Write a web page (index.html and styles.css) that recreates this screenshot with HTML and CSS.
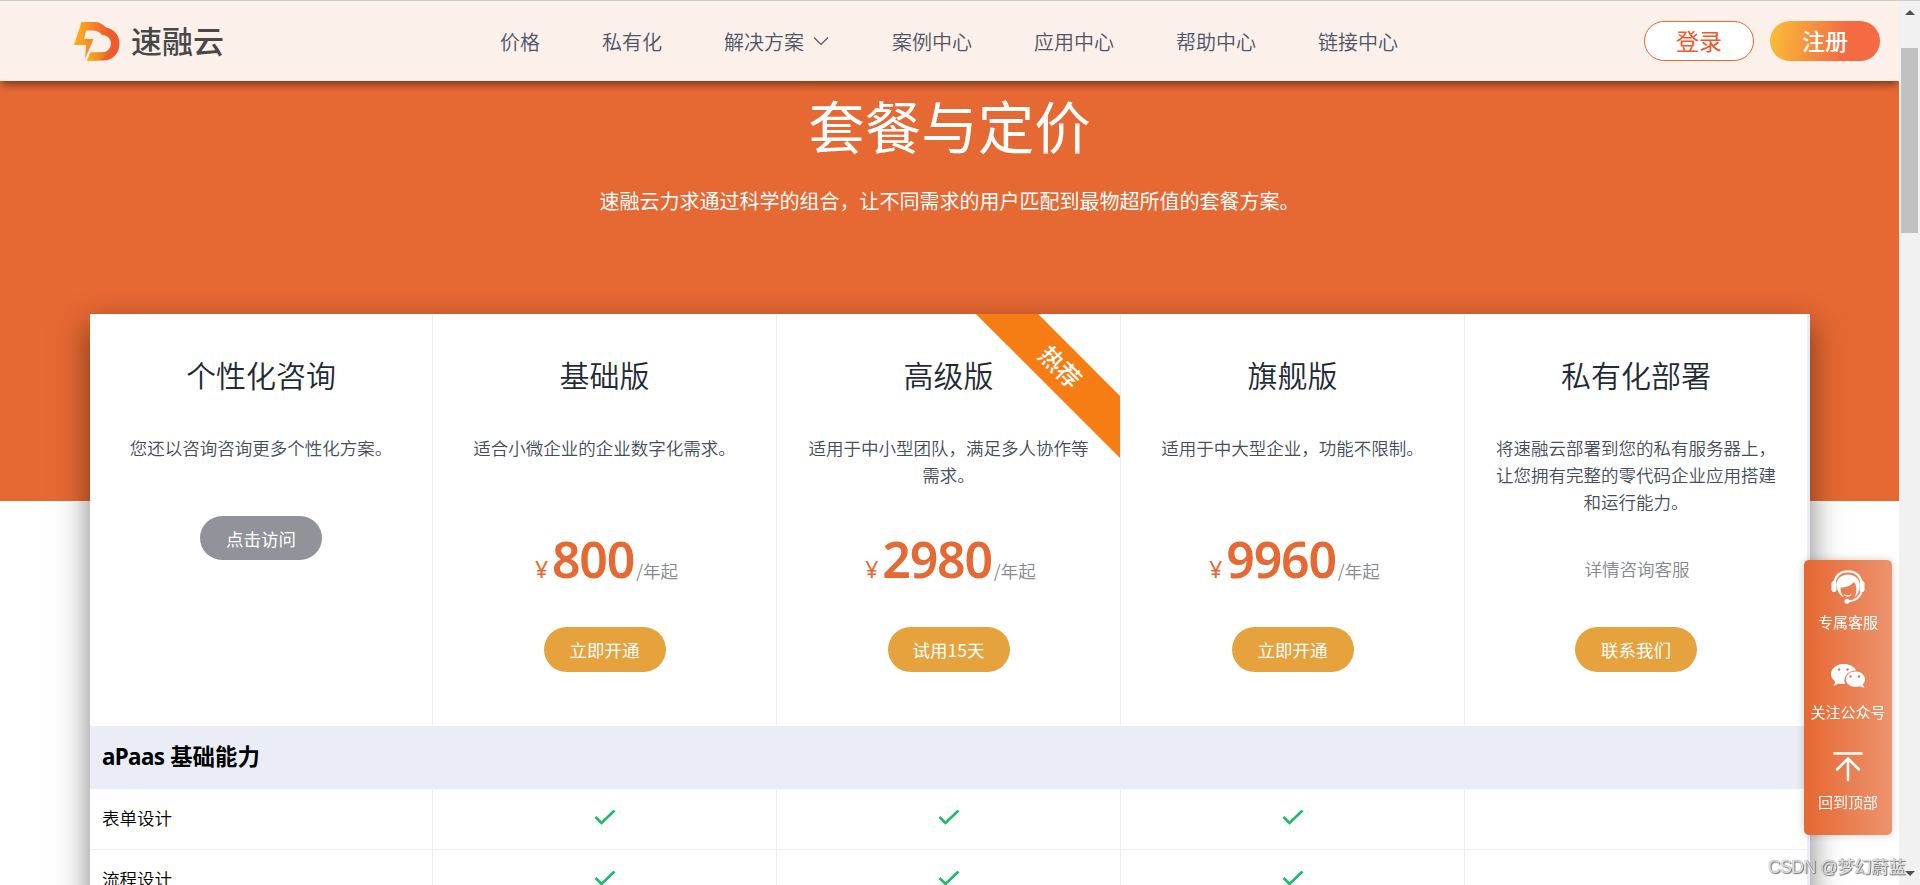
FILE: index.html
```
<!DOCTYPE html>
<html lang="zh-CN">
<head>
    <meta charset="UTF-8">
    <meta name="viewport" content="width=device-width, initial-scale=1.0">
    <title>速融云 - 套餐与定价</title>
    <link rel="stylesheet" href="styles.css">
</head>
<body>

    <div class="page">
        <header class="header">
            <a class="logo">
                <svg width="46" height="39" viewBox="0 0 46 39">
                    <defs>
                        <linearGradient id="logo-main" x1="0" y1="0" x2="1" y2="0">
                            <stop offset="0.1" stop-color="#f9a921"/>
                            <stop offset="0.75" stop-color="#f15a2b"/>
                        </linearGradient>
                        <linearGradient id="logo-foot" x1="0" y1="0" x2="1" y2="0">
                            <stop offset="0" stop-color="#fbb01f"/>
                            <stop offset="1" stop-color="#e2711c"/>
                        </linearGradient>
                    </defs>
                    <path fill="url(#logo-main)" d="M7.5 0H20c5 0 9 2 12 5.500C40 7 45.500 13 45.500 21.500 45.500 31 39 38.500 29 38.500H13l3.500-8H27c6 0 10-4 10-9 0-5-4-8.500-9-8.500-2.500-3-5-4.500-9-4.500h-7L10 17h9.500L11 37l1-14H0z"/>
                    <path fill="url(#logo-foot)" d="M16.500 30.500H28c3 0 5-1 7-2.500-2 5-6 9-12 10.500H13z"/>
                </svg>
                <span>速融云</span>
            </a>
            <nav class="nav">
                <a>价格</a>
                <a>私有化</a>
                <a>解决方案<svg class="arrow" width="16" height="10" viewBox="0 0 16 10"><path d="M1 1.500l7 7 7-7"/></svg></a>
                <a>案例中心</a>
                <a>应用中心</a>
                <a>帮助中心</a>
                <a>链接中心</a>
            </nav>
            <div class="user">
                <button class="btn-login">登录</button>
                <button class="btn-reg">注册</button>
            </div>
        </header>

        <section class="banner">
            <h1>套餐与定价</h1>
            <p>速融云力求通过科学的组合，让不同需求的用户匹配到最物超所值的套餐方案。</p>
        </section>

        <div class="plans">
            <div class="row row-head">
                <div class="cell">
                    <h2>个性化咨询</h2>
                    <p class="desc">您还以咨询咨询更多个性化方案。</p>
                    <button class="btn btn-info">点击访问</button>
                </div>
                <div class="cell">
                    <h2>基础版</h2>
                    <p class="desc">适合小微企业的企业数字化需求。</p>
                    <div class="price"><i>¥</i><b>800</b><span>/年起</span></div>
                    <button class="btn">立即开通</button>
                </div>
                <div class="cell">
                    <div class="ribbon"><span>热荐</span></div>
                    <h2>高级版</h2>
                    <p class="desc">适用于中小型团队，满足多人协作等需求。</p>
                    <div class="price"><i>¥</i><b>2980</b><span>/年起</span></div>
                    <button class="btn">试用15天</button>
                </div>
                <div class="cell">
                    <h2>旗舰版</h2>
                    <p class="desc">适用于中大型企业，功能不限制。</p>
                    <div class="price"><i>¥</i><b>9960</b><span>/年起</span></div>
                    <button class="btn">立即开通</button>
                </div>
                <div class="cell">
                    <h2>私有化部署</h2>
                    <p class="desc">将速融云部署到您的私有服务器上，让您拥有完整的零代码企业应用搭建和运行能力。</p>
                    <div class="price price-text"><span>详情咨询客服</span></div>
                    <button class="btn">联系我们</button>
                </div>
            </div>
            <div class="group"><span>aPaas</span> 基础能力</div>
            <div class="row row-item">
                <div class="cell name">表单设计</div>
                <div class="cell"><svg class="check" viewBox="0 0 22 16"><path d="M1.500 8l6 6L20.500 1.500"/></svg></div>
                <div class="cell"><svg class="check" viewBox="0 0 22 16"><path d="M1.500 8l6 6L20.500 1.500"/></svg></div>
                <div class="cell"><svg class="check" viewBox="0 0 22 16"><path d="M1.500 8l6 6L20.500 1.500"/></svg></div>
                <div class="cell"></div>
            </div>
            <div class="row row-item">
                <div class="cell name">流程设计</div>
                <div class="cell"><svg class="check" viewBox="0 0 22 16"><path d="M1.500 8l6 6L20.500 1.500"/></svg></div>
                <div class="cell"><svg class="check" viewBox="0 0 22 16"><path d="M1.500 8l6 6L20.500 1.500"/></svg></div>
                <div class="cell"><svg class="check" viewBox="0 0 22 16"><path d="M1.500 8l6 6L20.500 1.500"/></svg></div>
                <div class="cell"></div>
            </div>
        </div>
    </div>

    <!-- scrollbar -->
    <div class="scrollbar">
        <div class="up"></div>
        <div class="thumb"></div>
        <div class="down"></div>
    </div>

    <!-- floating toolbar -->
    <div class="toolbar">
        <div class="tool">
            <svg width="34" height="34" viewBox="0 0 34 34">
                <path d="M3.500 12C5 5 10 1.300 17 1.300S29 5 30.500 12" fill="none" stroke="#fff" stroke-width="2.200"/>
                <rect x="0.500" y="11" width="5" height="11" rx="2.500" fill="#fff"/>
                <rect x="28.500" y="11" width="5" height="11" rx="2.500" fill="#fff"/>
                <path d="M5.500 14C6 8 11 4.500 17 4.500S28 8 28.500 14c.3 6-1.500 10.500-5 13.500 2-3.500 2.500-8 1-13.500l-2-2c-3 4-7 5.500-13 5.500 0 4 1 7 3.500 10C8 25 5.500 20 5.500 14z" fill="#fff"/>
                <path d="M12.500 24c2.500 1.600 6 1.600 8.500 0-1.500 3.500-7 3.500-8.500 0z" fill="#fff"/>
                <path d="M31 20c-1.500 7-6 11-14 11.500" fill="none" stroke="#fff" stroke-width="2"/>
                <circle cx="16" cy="31.300" r="2.500" fill="#fff"/>
            </svg>
            <span>专属客服</span>
        </div>
        <div class="tool">
            <svg width="34" height="34" viewBox="0 0 34 34">
                <path d="M12.500 4C5.500 4 0 8.500 0 14c0 3.200 1.700 5.800 4.300 7.600L2.500 26l5-2.600c2 .6 4.400.8 6.500.5-2.500-6.500 2.500-13.500 11-13.500C23.500 6.500 18.500 4 12.500 4z" fill="#fff"/>
                <path d="M24.500 11.500c-5.500 0-9.700 3.500-9.700 7.700s4.200 7.600 9.700 7.600c1.400 0 2.700-.2 4-.6l4.800 1.600-1.600-3.500c1.500-1.400 2.300-3.200 2.300-5.100 0-4.200-4.200-7.700-9.500-7.700z" fill="#fff"/>
                <g fill="#e97a4a"><circle cx="8" cy="9.500" r="1.300"/><circle cx="16.500" cy="9.500" r="1.300"/><circle cx="19.500" cy="16.500" r="1.200"/><circle cx="28" cy="16.500" r="1.200"/></g>
            </svg>
            <span>关注公众号</span>
        </div>
        <div class="tool">
            <svg width="34" height="34" viewBox="0 0 34 34">
                <path d="M3.500 3.500h27M17 30V9M6 19.500l11-11 11 11" fill="none" stroke="#fff" stroke-width="2.600" stroke-linecap="round"/>
            </svg>
            <span>回到顶部</span>
        </div>
    </div>

    <div class="watermark">CSDN @梦幻蔚蓝</div>

</body>
</html>
```

FILE: styles.css
```
* {
    box-sizing: border-box;
}
body {
    margin: 0;
    width: 1920px;
    height: 885px;
    overflow: hidden;
    display: flex;
    font-family: "Noto Sans CJK SC", "Noto Sans", sans-serif;
    font-weight: 350;
    background: #fff;
}
h1, h2, p {
    margin: 0;
    font-weight: inherit;
}
button {
    font-family: inherit;
    font-weight: inherit;
    padding: 0;
    border: none;
}
.page {
    width: 1899px;
    height: 885px;
    overflow: hidden;
    border-top: 1px solid #ccc;
}
.header {
    position: relative;
    z-index: 2;
    height: 80px;
    padding: 0 19px 0 74px;
    display: flex;
    align-items: center;
    background: #fcf0ea;
    box-shadow: 0 5px 8px -2px rgba(0, 0, 0, 0.5);
}
.logo {
    width: 426px;
    display: flex;
    align-items: center;
    gap: 11px;
    font-size: 31px;
    line-height: 40px;
    font-weight: 500;
    color: #484848;
}
.logo span {
    margin-top: -2px;
}
.nav {
    flex: 1;
    display: flex;
    gap: 62px;
    font-size: 20px;
    color: #4b5567;
}
.arrow {
    margin-left: 9px;
    vertical-align: 4px;
    fill: none;
    stroke: #4b5567;
    stroke-width: 1.2;
}
.nav .arrow {
    margin-right: 1px;
}
.user {
    display: flex;
    gap: 16px;
}
.user button {
    width: 110px;
    height: 40px;
    border-radius: 20px;
    font-size: 23px;
    line-height: 34px;
    padding-bottom: 2px;
}
.btn-login {
    border: 1px solid #e66832 !important;
    background: #fff;
    color: #f0592b;
    font-weight: 400 !important;
}
.btn-reg {
    background: linear-gradient(100deg, #f9b938 5%, #f46a42 68%);
    color: #fff;
    font-weight: 500 !important;
}
.banner {
    height: 420px;
    padding-top: 3px;
    text-align: center;
    background: #e66832;
    color: #fff;
}
.banner h1 {
    font-size: 56.5px;
    line-height: 80px;
    font-weight: 400;
}
.banner p {
    margin-top: 22px;
    font-size: 20px;
    line-height: 30px;
    font-weight: 400;
}
.plans {
    position: relative;
    width: 1720px;
    margin: -187px 0 0 90px;
    border-right: 3px solid #eaedf5;
    background: #fff;
    box-shadow: 0 12px 30px rgba(0, 0, 0, 0.5);
}
.row {
    display: grid;
    grid-template-columns: 343px 344px 344px 344px 342px;
}
.cell {
    border-right: 1px solid #eaedf5;
}
.cell:last-child {
    border-right: none;
}
.row-head {
    height: 412px;
}
.row-head .cell {
    position: relative;
    overflow: hidden;
    display: flex;
    flex-direction: column;
    align-items: center;
    padding-top: 40px;
    text-align: center;
}
.row-head h2 {
    font-size: 30px;
    line-height: 40px;
    color: #1f2a37;
}
.desc {
    width: 281px;
    height: 81px;
    margin-top: 40px;
    font-size: 17.5px;
    line-height: 27px;
    color: #444d5c;
}
.price {
    height: 60px;
    margin-top: 14px;
    display: flex;
    align-items: baseline;
    line-height: 60px;
    font-size: 17.5px;
    color: #85888f;
}
.price span {
    margin-left: 2px;
}
.price-text {
    padding-top: 10px;
}
.price i {
    width: 21px;
    font: 400 23px/60px "Noto Sans", sans-serif;
    color: #e66832;
}
.price b {
    font: 600 50px/60px "Noto Sans", sans-serif;
    letter-spacing: -1.2px;
    color: #e66832;
}
.btn {
    width: 122px;
    height: 45px;
    margin-top: 38px;
    border-radius: 23px;
    background: #e6a23c;
    color: #fff;
    font-size: 17.5px;
    font-weight: 400;
}
.btn-info {
    height: 44px;
    margin-top: 1px;
    background: #909399;
}
.ribbon {
    position: absolute;
    top: 31px;
    left: 173px;
    width: 220px;
    height: 44px;
    background: #f67d13;
    color: #fff;
    font-size: 24px;
    line-height: 42px;
    font-weight: 500;
    transform: rotate(45deg);
}
.group {
    height: 63px;
    padding-left: 12px;
    margin-right: -3px;
    background: #eaedf5;
    font-size: 22.4px;
    font-family: "Noto Sans", "Noto Sans CJK SC", sans-serif;
    line-height: 61px;
    font-weight: 700;
    color: #000;
}
.group span {
    letter-spacing: -0.6px;
}
.row-item {
    height: 61px;
    border-bottom: 1px solid #eaedf5;
}
.row-item .cell {
    display: flex;
    align-items: center;
    justify-content: center;
}
.row-item .name {
    justify-content: flex-start;
    padding: 0 0 3px 12px;
    font-size: 17.5px;
    color: #000;
}
.check {
    width: 22px;
    height: 16px;
    margin-bottom: 5px;
    fill: none;
    stroke: #1dbb6a;
    stroke-width: 2.6;
}
.scrollbar {
    width: 21px;
    height: 885px;
    padding: 9px 2px;
    display: flex;
    flex-direction: column;
    align-items: center;
    background: #f1f1f1;
    border-top: 1px solid #ccc;
}
.up, .down {
    border: 5px solid transparent;
    border-top: none;
    border-bottom-color: #505050;
}
.thumb {
    width: 17px;
    height: 185px;
    margin-top: 33px;
    background: #c1c1c1;
}
.down {
    margin-top: auto;
    border: 5px solid transparent;
    border-bottom: none;
    border-top-color: #505050;
}
.toolbar {
    position: fixed;
    z-index: 3;
    left: 1804px;
    top: 560px;
    width: 88px;
    height: 275px;
    padding-top: 10px;
    border-radius: 5px;
    background: linear-gradient(to right, #e66832, #ec936e);
    box-shadow: 0 0 8px rgba(0, 0, 0, 0.2);
    color: #fff;
    font-size: 15px;
    font-weight: 400;
}
.tool {
    height: 90px;
    display: flex;
    flex-direction: column;
    align-items: center;
}
.tool span {
    margin-top: 7px;
    line-height: 22px;
    white-space: nowrap;
}
.watermark {
    position: fixed;
    z-index: 4;
    left: 1768px;
    top: 854px;
    font: 400 17.5px/26px "Liberation Sans", "Noto Sans CJK SC", sans-serif;
    letter-spacing: -0.5px;
    color: rgba(255, 255, 255, 0.75);
    text-shadow: 0 0 1px #666, 1px 1px 1px #777;
    white-space: nowrap;
}
```
